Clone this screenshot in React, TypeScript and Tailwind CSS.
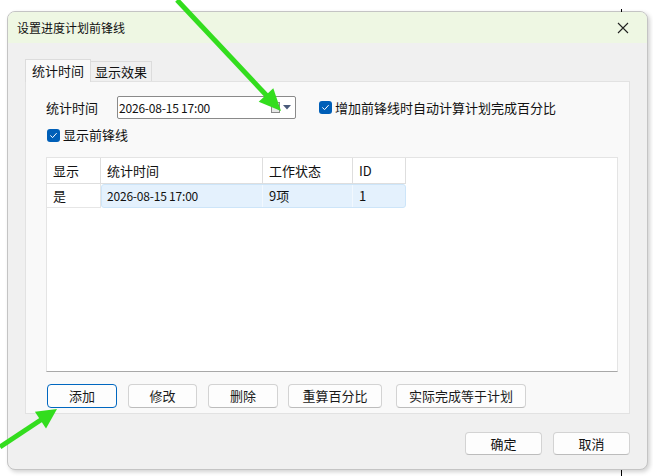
import React from "react";

const font = { fontFamily: '"Noto Sans CJK SC", "Noto Sans", sans-serif' };

function Check() {
  return (
    <span className="inline-flex w-[13px] h-[13px] rounded-[3px] bg-[#005fb8] items-center justify-center shrink-0">
      <svg width="9" height="9" viewBox="0 0 9 9">
        <path d="M1.6 4.7 L3.6 6.6 L7.4 2.4" fill="none" stroke="#fff" strokeWidth="1" strokeLinecap="round" strokeLinejoin="round" />
      </svg>
    </span>
  );
}

function Btn({ w, children, focus }: { w: string; children: React.ReactNode; focus?: boolean }) {
  return (
    <div
      className={
        "h-[24px] flex items-center justify-center rounded-[4px] bg-[#fdfdfd] text-[13px] text-[#1a1a1a] " +
        w +
        (focus ? " border border-[#0067c0]" : " border border-[#d3d3d3] border-b-[#bcbcbc]")
      }
    >
      {children}
    </div>
  );
}

export default function App() {
  return (
    <div className="w-[653px] h-[476px] bg-white relative overflow-hidden" style={font}>
      {/* stray screen marks */}
      <div className="absolute left-[621px] top-[9px] w-px h-[3px] bg-black" />
      <div className="absolute left-[621px] top-[470px] w-px h-[6px] bg-black" />

      <div className="ml-[7px] mt-[11px] w-[641px] h-[459px] rounded-[8px] border border-[#c4c4c4] bg-[#f0f0f0] flex flex-col overflow-hidden shadow-[2px_2px_4px_rgba(0,0,0,0.18)]">
        {/* title bar */}
        <div className="h-[31px] shrink-0 bg-[#eef7e3] flex items-center pl-[9px] pr-[8px] text-[12px] text-[#111]">
          <span>设置进度计划前锋线</span>
          <div className="ml-auto w-[30px] h-[30px] flex items-center justify-center mr-[1px]">
            <svg width="12" height="12" viewBox="0 0 12 12">
              <path d="M1 1 L11 11 M11 1 L1 11" stroke="#222" strokeWidth="1.1" />
            </svg>
          </div>
        </div>

        {/* body */}
        <div className="flex-1 flex flex-col px-[17px] pt-[16px]">
          {/* tabs */}
          <div className="flex items-end h-[22px]">
            <div className="h-[23px] w-[66px] bg-[#f9f9f9] border border-[#dcdcdc] border-b-0 flex items-center justify-center text-[13px] text-[#111] relative z-10 -mb-px">
              统计时间
            </div>
            <div className="h-[20px] w-[61px] bg-[#f0f0f0] border border-[#dcdcdc] border-l-0 border-b-0 flex items-center justify-center text-[13px] text-[#111]">
              显示效果
            </div>
          </div>
          {/* panel */}
          <div className="h-[333px] bg-[#f9f9f9] border border-[#e2e2e2] flex flex-col pl-[20px] pr-[11px] pt-[14px]">
            <div className="flex items-center h-[23px]">
              <span className="text-[13px] text-[#111] w-[71px]">统计时间</span>
              <div className="w-[179px] h-[23px] bg-white border border-[#8a8a8a] rounded-[2px] flex items-center pl-[1px] pr-[4px]">
                <span className="text-[12px] text-[#111] tracking-[-0.2px]">2026-08-15 17:00</span>
                <div className="ml-auto flex items-center gap-[3px]">
                  <div className="w-[9px] h-[11px] border border-[#8a8a8a] bg-[#e8e8e8]" />
                  <svg width="8" height="5" viewBox="0 0 8 5">
                    <path d="M0 0 L8 0 L4 4.5 Z" fill="#4a5a7a" />
                  </svg>
                </div>
              </div>
              <div className="flex items-center gap-[3px] ml-[23px]">
                <Check />
                <span className="text-[13px] text-[#111]">增加前锋线时自动计算计划完成百分比</span>
              </div>
            </div>
            <div className="flex items-center gap-[3px] mt-[9px] h-[14px] ml-px">
              <Check />
              <span className="text-[13px] text-[#111]">显示前锋线</span>
            </div>

            {/* table */}
            <div className="mt-[15px] h-[215px] bg-white border border-[#e4e4e4] border-b-[#a8a8a8] flex flex-col">
              <div className="flex h-[26px] text-[13px] text-[#111]">
                <div className="w-[54px] border-r border-b border-[#dedede] flex items-center pl-[6px]">显示</div>
                <div className="w-[162px] border-r border-b border-[#dedede] flex items-center pl-[6px]">统计时间</div>
                <div className="w-[90px] border-r border-b border-[#dedede] flex items-center pl-[6px]">工作状态</div>
                <div className="w-[53px] border-r border-b border-[#dedede] flex items-center pl-[6px]">ID</div>
              </div>
              <div className="flex h-[24px] text-[13px] text-[#111]">
                <div className="w-[54px] border-r border-b border-[#e6e6e6] flex items-center pl-[6px]">是</div>
                <div className="w-[305px] flex bg-[#e4f1fd] border border-[#cde5f9] rounded-[3px]">
                  <div className="w-[161px] border-r border-[#ffffff80] flex items-center pl-[5px] text-[12px] tracking-[-0.2px]">2026-08-15 17:00</div>
                  <div className="w-[90px] border-r border-[#ffffff80] flex items-center pl-[6px]">9项</div>
                  <div className="flex-1 flex items-center pl-[6px]">1</div>
                </div>
              </div>
            </div>

            {/* action buttons */}
            <div className="flex items-center mt-[12px] ml-px">
              <Btn w="w-[70px]" focus>添加</Btn>
              <div className="w-[11px]" />
              <Btn w="w-[69px]">修改</Btn>
              <div className="w-[11px]" />
              <Btn w="w-[70px]">删除</Btn>
              <div className="w-[10px]" />
              <Btn w="w-[94px]">重算百分比</Btn>
              <div className="w-[14px]" />
              <Btn w="w-[130px]">实际完成等于计划</Btn>
            </div>
          </div>

          {/* footer */}
          <div className="flex justify-end mt-[18px] gap-[11px]">
            <div className="w-[77px] h-[23px] flex items-center justify-center rounded-[4px] bg-[#fdfdfd] border border-[#d3d3d3] border-b-[#bcbcbc] text-[13px] text-[#111]">确定</div>
            <div className="w-[77px] h-[23px] flex items-center justify-center rounded-[4px] bg-[#fdfdfd] border border-[#d3d3d3] border-b-[#bcbcbc] text-[13px] text-[#111]">取消</div>
          </div>
        </div>
      </div>

      {/* annotation arrows */}
      <svg className="absolute left-0 top-0 pointer-events-none" width="653" height="476" viewBox="0 0 653 476">
        <line x1="177" y1="0" x2="268" y2="97" stroke="#33dd1e" strokeWidth="5" />
        <polygon points="281,111 258.7,101.8 273.3,88.2" fill="#33dd1e" />
        <line x1="0" y1="447" x2="43" y2="418.5" stroke="#33dd1e" strokeWidth="5" />
        <polygon points="57,409 46,428.4 34.9,411.8" fill="#33dd1e" />
      </svg>
    </div>
  );
}
